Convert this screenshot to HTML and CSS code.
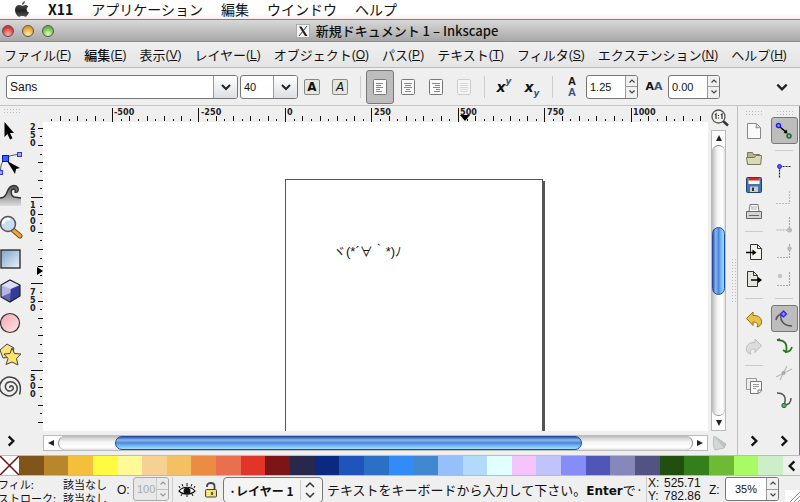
FILE: index.html
```html
<!DOCTYPE html>
<html lang="ja">
<head>
  <meta charset="UTF-8">
  <title>新規ドキュメント 1 – Inkscape</title>
  <link rel="stylesheet" href="styles.css">
</head>
<body>
  <!-- shared symbols -->
  <svg class="defs" width="0" height="0" aria-hidden="true">
    <defs>
      <symbol id="chev-down" viewBox="0 0 12 12"><path d="M2 4l4 4 4-4" fill="none" stroke="#222" stroke-width="2"/></symbol>
      <symbol id="chev-right" viewBox="0 0 12 12"><path d="M4 2l4 4-4 4" fill="none" stroke="#111" stroke-width="2"/></symbol>
      <symbol id="chev-left" viewBox="0 0 12 12"><path d="M8 2L4 6l4 4" fill="none" stroke="#111" stroke-width="2"/></symbol>
      <symbol id="spin-up" viewBox="0 0 8 6"><path d="M1.500 4.500L4 2l2.500 2.500" fill="none" stroke="#444" stroke-width="1.200"/></symbol>
      <symbol id="spin-down" viewBox="0 0 8 6"><path d="M1.500 1.500L4 4l2.500-2.500" fill="none" stroke="#444" stroke-width="1.200"/></symbol>
      <linearGradient id="gBlue" x1="0" y1="0" x2="1" y2="1"><stop offset="0" stop-color="#7fa3c9"/><stop offset="1" stop-color="#eaf2fa"/></linearGradient>
      <linearGradient id="gPink" x1="0" y1="0" x2="1" y2="1"><stop offset="0" stop-color="#f3a3b0"/><stop offset="1" stop-color="#fde8ea"/></linearGradient>
      <linearGradient id="gWave" x1="0" y1="0" x2="0" y2="1"><stop offset="0" stop-color="#555"/><stop offset="1" stop-color="#ddd"/></linearGradient>
      <linearGradient id="gApple" x1="0" y1="0" x2="0" y2="1"><stop offset="0" stop-color="#666"/><stop offset="0.600" stop-color="#222"/><stop offset="1" stop-color="#555"/></linearGradient>
    </defs>
  </svg>

  <nav class="mac-menu">
    <button class="apple" aria-label="Apple">
      <svg width="16" height="17" viewBox="0 0 16 17"><path fill="url(#gApple)" d="M11 .3c.1 1.900-1.400 3.500-3.100 3.500C7.700 2 9.300.4 11 .3zM8.200 4.700c.7 0 1.800-.9 3.300-.8 1.100 0 2.200.6 2.900 1.500-2.600 1.600-2.100 5 .5 6.100-.7 1.900-2.100 4.300-3.600 4.300-1.200 0-1.600-.7-3-.7s-1.900.7-3 .7C3.500 15.800.9 11.900 1 8.700 1.100 5.700 3 4 4.900 4c1.400 0 2.500.7 3.300.7z"/></svg>
    </button>
    <button class="app-name">X11</button>
    <button>アプリケーション</button>
    <button>編集</button>
    <button>ウインドウ</button>
    <button>ヘルプ</button>
  </nav>

  <header class="titlebar">
    <div class="lights">
      <button class="light red" aria-label="閉じる"></button>
      <button class="light yellow" aria-label="しまう"></button>
      <button class="light green" aria-label="拡大"></button>
    </div>
    <h1>
      <svg width="14" height="14" viewBox="0 0 14 14"><rect x=".5" y=".5" width="13" height="13" fill="#f4f4f4" stroke="#aaa"/><path d="M3 2.500h2.500L11.500 12H9z" fill="#222"/><path d="M11 2L3 12" stroke="#333" stroke-width="1"/></svg>
      新規ドキュメント 1 – Inkscape
    </h1>
  </header>

  <nav class="menubar">
    <button>ファイル<span>(<u>F</u>)</span></button>
    <button class="strong">編集<span>(<u>E</u>)</span></button>
    <button>表示<span>(<u>V</u>)</span></button>
    <button>レイヤー<span>(<u>L</u>)</span></button>
    <button>オブジェクト<span>(<u>O</u>)</span></button>
    <button>パス<span>(<u>P</u>)</span></button>
    <button>テキスト<span>(<u>T</u>)</span></button>
    <button>フィルタ<span>(<u>S</u>)</span></button>
    <button>エクステンション<span>(<u>N</u>)</span></button>
    <button>ヘルプ<span>(<u>H</u>)</span></button>
  </nav>

  <div class="toolbar">
    <div class="combo combo-font">
      <input type="text" value="Sans" aria-label="フォント">
      <button aria-label="フォント一覧"><svg width="12" height="12"><use href="#chev-down"/></svg></button>
    </div>
    <div class="combo combo-size">
      <input type="text" value="40" aria-label="サイズ">
      <button aria-label="サイズ一覧"><svg width="12" height="12"><use href="#chev-down"/></svg></button>
    </div>
    <button class="tb" aria-label="太字"><span class="letter bold">A</span></button>
    <button class="tb" aria-label="斜体"><span class="letter italic">A</span></button>
    <span class="sep"></span>
    <button class="tb on" aria-label="左揃え"><svg width="14" height="16" viewBox="0 0 14 16"><rect x=".5" y=".5" width="13" height="15" rx="1" fill="#fafafa" stroke="#777"/><path d="M3 4.500h7M3 6.500h5M3 8.500h7M3 10.500h4M3 12.500h6" stroke="#888"/></svg></button>
    <button class="tb" aria-label="中央揃え"><svg width="14" height="16" viewBox="0 0 14 16"><rect x=".5" y=".5" width="13" height="15" rx="1" fill="#fafafa" stroke="#777"/><path d="M3 4.500h8M4 6.500h6M3 8.500h8M5 10.500h4M4 12.500h6" stroke="#888"/></svg></button>
    <button class="tb" aria-label="右揃え"><svg width="14" height="16" viewBox="0 0 14 16"><rect x=".5" y=".5" width="13" height="15" rx="1" fill="#fafafa" stroke="#777"/><path d="M3 4.500h8M6 6.500h5M4 8.500h7M7 10.500h4M5 12.500h6" stroke="#888"/></svg></button>
    <button class="tb" aria-label="両端揃え" disabled><svg width="14" height="16" viewBox="0 0 14 16"><rect x=".5" y=".5" width="13" height="15" rx="1" fill="#f4f4f4" stroke="#ccc"/><path d="M3 4.500h8M3 6.500h8M3 8.500h8M3 10.500h8M3 12.500h8" stroke="#d8d8d8"/></svg></button>
    <span class="sep"></span>
    <button class="tb script" aria-label="上付き文字">x<sup>y</sup></button>
    <button class="tb script" aria-label="下付き文字">x<sub>y</sub></button>
    <span class="sep"></span>
    <label class="tb stack" for="line-height"><b>A</b><b class="blue">A</b></label>
    <div class="spin">
      <input type="text" id="line-height" value="1.25">
      <span class="arrows">
        <button aria-label="増やす"><svg width="8" height="6"><use href="#spin-up"/></svg></button>
        <button aria-label="減らす"><svg width="8" height="6"><use href="#spin-down"/></svg></button>
      </span>
    </div>
    <label class="tb pair" for="letter-space"><b>A</b><b class="blue">A</b></label>
    <div class="spin">
      <input type="text" id="letter-space" value="0.00">
      <span class="arrows">
        <button aria-label="増やす"><svg width="8" height="6"><use href="#spin-up"/></svg></button>
        <button aria-label="減らす"><svg width="8" height="6"><use href="#spin-down"/></svg></button>
      </span>
    </div>
    <button class="tb more" aria-label="その他"><svg width="14" height="14"><use href="#chev-down"/></svg></button>
  </div>

  <main class="workspace">
    <!-- tools -->
    <div class="toolbox">
      <span class="grip"></span>
      <button aria-label="選択"><svg width="24" height="24" viewBox="0 0 24 24"><path d="M5.500 3v15l3-3 2.500 5.500 2.500-1.200L11 14h4z" fill="#000"/></svg></button>
      <button aria-label="ノード"><svg width="24" height="24" viewBox="0 0 24 24"><path d="M1.500 20C1.500 9 7 4 20 3.500" fill="none" stroke="#555"/><rect x="18.500" y="1.500" width="4" height="4" fill="#aab" stroke="#33e"/><rect x=".5" y="19.500" width="3" height="4" fill="#aab" stroke="#33e"/><rect x="3.500" y="4.500" width="6" height="6" fill="#36f" stroke="#11c"/><path d="M8 10l13 7-4 1-1 5z" fill="#000"/></svg></button>
      <button aria-label="微調整"><svg width="24" height="24" viewBox="0 0 24 24"><path d="M1 15c5 0 6-3 8-8 2-5 8-6 10-2 1 3-1 5-3 4 1-2 0-3-2-3-3 1-2 7 1 8l7 1V23H1z" fill="url(#gWave)"/><path d="M1 15c5 0 6-3 8-8 2-5 8-6 10-2 1 3-1 5-3 4 1-2 0-3-2-3-3 1-2 7 1 8l7 1" fill="none" stroke="#333" stroke-width="1.500"/></svg></button>
      <button aria-label="ズーム"><svg width="24" height="24" viewBox="0 0 24 24"><path d="M14 15l7 6" stroke="#775018" stroke-width="5" stroke-linecap="round"/><path d="M14 15l7 6" stroke="#f0a53a" stroke-width="3" stroke-linecap="round"/><circle cx="9" cy="9" r="7.500" fill="#c9ddf2" stroke="#555" stroke-width="1.500"/><path d="M4 9a5 5 0 0 1 7-4.500" fill="none" stroke="#fff" stroke-width="2.500"/></svg></button>
      <button aria-label="矩形"><svg width="24" height="24" viewBox="0 0 24 24"><rect x="2" y="3" width="19" height="18" fill="url(#gBlue)" stroke="#222" stroke-width="1.300"/></svg></button>
      <button aria-label="3D ボックス"><svg width="24" height="24" viewBox="0 0 24 24"><path d="M2 6l9-5 10 5v11l-10 6-9-5z" fill="#6368b4"/><path d="M2 6l9-5v13l-9 4z" fill="#b4b7e6"/><path d="M11 1l10 5v11l-10-3z" fill="#8e92d2"/><path d="M2 6l9-5 10 5-9 4z" fill="#dcdef6"/><path d="M12 10l9-4v11l-10 6z" fill="#353c98"/><path d="M2 6l9-5 10 5v11l-10 6-9-5z" fill="none" stroke="#222" stroke-width="1.200"/></svg></button>
      <button aria-label="円/弧"><svg width="24" height="24" viewBox="0 0 24 24"><circle cx="11" cy="12" r="9.500" fill="url(#gPink)" stroke="#333" stroke-width="1.200"/></svg></button>
      <button aria-label="星形"><svg width="24" height="24" viewBox="0 0 24 24"><path d="M1 7l7-6 7 4-2 9-9 1z" fill="#fbe37a" stroke="#444"/><path d="M13 5l2.500 5.500 6.500.5-4.500 4.500 1.500 6.500-6-3-6 2.500 2-6-4-4.500 6-.5z" fill="#ffe46a" stroke="#444"/></svg></button>
      <button aria-label="らせん"><svg width="24" height="24" viewBox="0 0 24 24"><path d="M11 13c-1-2 2-3 3-1 1.500 3-3 5-5.500 3.500C5 13 6 8 10 7c5-1 9 3 8 8-1 4-6 7-10.500 5.500C2 19 0 14 1 9.500 2.500 4 8 1 13.500 2.500 20 4 23 11 20.500 19.500" fill="none" stroke="#444" stroke-width="1.500"/></svg></button>
      <button class="last" aria-label="その他のツール"><svg width="14" height="14"><use href="#chev-right"/></svg></button>
    </div>

    <!-- vertical ruler -->
    <div class="v-ruler">
      <svg width="14" height="100%">
        <defs><pattern id="vt" width="14" height="173" y="75" patternUnits="userSpaceOnUse">
          <path d="M2 .5h12M11 9.500h2M9 17.500h5M11 26.500h2M9 35.500h5M11 43.500h2M9 52.500h5M11 61.500h2M9 69.500h5M11 78.500h2M2 86.500h12M11 95.500h2M9 104.500h5M11 112.500h2M9 121.500h5M11 130.500h2M9 138.500h5M11 147.500h2M9 156.500h5M11 164.500h2" stroke="#111" shape-rendering="crispEdges"/>
        </pattern></defs>
        <rect width="14" height="100%" fill="url(#vt)"/>
        <path d="M8 145l6 4-6 4z"/>
        <g class="ruler-text">
          <text x="1" y="8">2</text><text x="1" y="16">5</text><text x="1" y="24">0</text>
          <text x="1" y="86">1</text><text x="1" y="94">0</text><text x="1" y="102">0</text><text x="1" y="110">0</text>
          <text x="1" y="173">7</text><text x="1" y="181">5</text><text x="1" y="189">0</text>
          <text x="1" y="259">5</text><text x="1" y="267">0</text><text x="1" y="275">0</text>
        </g>
      </svg>
    </div>

    <!-- ruler, canvas, scrollbar -->
    <div class="editor">
      <div class="h-ruler">
        <svg width="100%" height="16">
          <defs><pattern id="ht" width="173" height="16" x="242" patternUnits="userSpaceOnUse">
            <path d="M.5 2v14M9.500 13v2M17.500 10v5M26.500 13v2M35.500 10v5M43.500 13v2M52.500 10v5M61.500 13v2M69.500 10v5M78.500 13v2M86.500 2v14M95.500 13v2M104.500 10v5M112.500 13v2M121.500 10v5M130.500 13v2M138.500 10v5M147.500 13v2M156.500 10v5M164.500 13v2" stroke="#111" shape-rendering="crispEdges"/>
          </pattern></defs>
          <rect x="6" width="99%" height="16" fill="url(#ht)"/>
          <path d="M417 9h10l-5 6z"/>
          <g class="ruler-text">
            <text x="71" y="9">-500</text><text x="158" y="9">-250</text><text x="244" y="9">0</text><text x="331" y="9">250</text>
            <text x="417" y="9">500</text><text x="504" y="9">750</text><text x="590" y="9">1000</text>
          </g>
        </svg>
      </div>
      <div class="canvas">
        <div class="page"><p>ヾ(*´∀｀*)ﾉ</p></div>
      </div>
      <div class="scroll h">
        <button aria-label="左へ"><svg width="8" height="8" viewBox="0 0 8 8"><path d="M7 1v6L1 4z" fill="#222"/></svg></button>
        <div class="track"><div class="thumb"></div></div>
        <button aria-label="右へ"><svg width="8" height="8" viewBox="0 0 8 8"><path d="M1 1v6l6-3z" fill="#222"/></svg></button>
      </div>
    </div>

    <div class="v-side">
      <button class="zoom-fit" aria-label="1:1"><svg width="18" height="18" viewBox="0 0 18 18"><path d="M12 12l5 4.500" stroke="#333" stroke-width="2.500"/><circle cx="7.500" cy="7.500" r="6.500" fill="#f4f4f0" stroke="#555" stroke-width="1.300"/><path d="M4 6l1-1v5M10 6l1-1v5M7.500 6v1M7.500 8.500v1" fill="none" stroke="#333" stroke-width="1.200"/></svg></button>
      <div class="scroll v">
        <button aria-label="上へ"><svg width="8" height="8" viewBox="0 0 8 8"><path d="M1 7h6L4 1z" fill="#222"/></svg></button>
        <div class="track"><div class="thumb"></div></div>
        <button aria-label="下へ"><svg width="8" height="8" viewBox="0 0 8 8"><path d="M1 1h6L4 7z" fill="#222"/></svg></button>
      </div>
      <button class="cms" aria-label="カラー表示"><svg width="16" height="16" viewBox="0 0 16 16"><path d="M2 1l12 8-2 4-9 2c-2-4-2-9-1-14z" fill="#d4d8d4" stroke="#bbb"/><path d="M2 1l12 8-2 4z" fill="#bcc2bc"/></svg></button>
    </div>
    <div class="side-grip"><span></span></div>

    <!-- commands -->
    <div class="panel commands">
      <span class="grip"></span>
      <button aria-label="新規"><svg width="18" height="18" viewBox="0 0 18 18"><path d="M2.500 1.500h9l4 4v11h-13z" fill="#fafafa" stroke="#888"/><path d="M11 1.500c1 2 0 3 0 4.500 1.500-.5 3-.5 4.500 0" fill="#ddd" stroke="#888"/></svg></button>
      <button aria-label="開く"><svg width="18" height="18" viewBox="0 0 18 18"><path d="M2.500 15V3.500h5l1 2h6V15z" fill="#b6b68c" stroke="#77775a"/><path d="M1.500 8.500h8l1.500-2h5.500l-.8 9H2.500z" fill="#d8d9b8" stroke="#77775a"/></svg></button>
      <button aria-label="保存"><svg width="18" height="18" viewBox="0 0 18 18"><rect x="1.500" y="1.500" width="15" height="15" rx="1" fill="#4673b0" stroke="#24406c"/><path d="M3.500 2h11v6h-11z" fill="#fff"/><path d="M3.500 2h11v2.500h-11z" fill="#d22"/><path d="M5 10.500h8V16H5z" fill="#ccc"/><path d="M7 11.500h2V15H7z" fill="#333"/></svg></button>
      <button aria-label="印刷"><svg width="18" height="18" viewBox="0 0 18 18"><path d="M5 1.500h8l1 7H4z" fill="#fff" stroke="#777"/><path d="M6 4h6M6 6h6" stroke="#aaa"/><path d="M1.500 8.500h15v7h-15z" fill="#d4d4d4" stroke="#666"/><path d="M4 12.500h10" stroke="#666"/></svg></button>
      <span class="rule"></span>
      <button aria-label="インポート"><svg width="18" height="18" viewBox="0 0 18 18"><path d="M5.500 1.500h7l4 4v11h-11z" fill="#f4f4f0" stroke="#333"/><path d="M12.500 1.500v4h4" fill="none" stroke="#333"/><path d="M1 9.500h7" stroke="#000" stroke-width="1.500"/><path d="M7.500 6.500l4 3-4 3z"/></svg></button>
      <button aria-label="エクスポート"><svg width="18" height="18" viewBox="0 0 18 18"><path d="M2.500 1.500h6l4 4v11h-10z" fill="#e4e4e0" stroke="#333"/><path d="M8.500 1.500v4h4" fill="none" stroke="#333"/><path d="M6 10h7" stroke="#000" stroke-width="1.500"/><path d="M13 7l4 3-4 3z"/></svg></button>
      <span class="rule"></span>
      <button aria-label="元に戻す"><svg width="18" height="18" viewBox="0 0 18 18"><path d="M8 2v3.500c6-.5 9 3 8.500 7.500-.3 2-2 3.500-4.500 4 2-3 0-5-4-5v3.500L1.500 8.500z" fill="#ebc246" stroke="#8d6d15"/></svg></button>
      <button aria-label="やり直す" disabled><svg width="18" height="18" viewBox="0 0 18 18"><path d="M10 2v3.500c-6-.5-9 3-8.500 7.500.3 2 2 3.500 4.500 4-2-3 0-5 4-5v3.500l6.500-7z" fill="#dcdcdc" stroke="#bbb"/></svg></button>
      <span class="rule"></span>
      <button aria-label="複製"><svg width="18" height="18" viewBox="0 0 18 18"><path d="M1.500 1.500h10v11h-10z" fill="#eee" stroke="#999"/><path d="M5.500 4.500h11V14l-3 2.500h-8z" fill="#f8f8f8" stroke="#777"/><path d="M8 7.500h6M8 9.500h6M8 11.500h3" stroke="#999"/><path d="M13 16v-3h3" fill="none" stroke="#777"/></svg></button>
      <button class="last" aria-label="その他のコマンド"><svg width="14" height="14"><use href="#chev-right"/></svg></button>
    </div>

    <!-- snapping -->
    <div class="panel snap">
      <span class="grip"></span>
      <button class="on" aria-label="スナップ"><svg width="18" height="18" viewBox="0 0 18 18"><path d="M5 5l6 5" stroke="#000" stroke-width="1.500"/><path d="M12.500 11.500L8.500 11l3-3.500z"/><circle cx="3.500" cy="3.500" r="2" fill="#99f" stroke="#22e" stroke-width="1.500"/><circle cx="14" cy="14" r="2" fill="#8b8" stroke="#264" stroke-width="1.500"/></svg></button>
      <span class="rule"></span>
      <button aria-label="境界枠"><svg width="18" height="18" viewBox="0 0 18 18"><path d="M4.500 4.500h12M4.500 4.500v12" stroke="#222" stroke-dasharray="2 1" stroke-width="1.200"/><circle cx="4.500" cy="4.500" r="2" fill="#55f" stroke="#22e"/></svg></button>
      <button aria-label="境界枠の辺"><svg width="18" height="18" viewBox="0 0 18 18"><path d="M14.500 2v12.500H1" fill="none" stroke="#bbb" stroke-dasharray="2 1" stroke-width="1.200"/></svg></button>
      <button aria-label="境界枠の角"><svg width="18" height="18" viewBox="0 0 18 18"><path d="M14.500 1v13H1" fill="none" stroke="#aaa" stroke-dasharray="2 1" stroke-width="1.200"/><circle cx="14.500" cy="14" r="2.500" fill="#bbb"/></svg></button>
      <button aria-label="辺の中点"><svg width="18" height="18" viewBox="0 0 18 18"><path d="M14.500 1v13.500H2" fill="none" stroke="#aaa" stroke-dasharray="2 1" stroke-width="1.200"/><circle cx="14.500" cy="5.500" r="2.200" fill="#bbb"/></svg></button>
      <button aria-label="境界枠の中心"><svg width="18" height="18" viewBox="0 0 18 18"><path d="M14.500 2v13.500H2" fill="none" stroke="#aaa" stroke-dasharray="2 1" stroke-width="1.200"/><circle cx="5" cy="6" r="2.200" fill="#c4c4c4"/></svg></button>
      <span class="rule"></span>
      <button class="on" aria-label="ノードにスナップ"><svg width="18" height="18" viewBox="0 0 18 18"><path d="M1 10c1-5 4-6 7-5M6 5c-1 6 3 11 11 11" fill="none" stroke="#555" stroke-width="1.500"/><path d="M8.500 1l3 3-3 3-3-3z" fill="#88f" stroke="#22e" stroke-width="1.200"/></svg></button>
      <button aria-label="パス"><svg width="18" height="18" viewBox="0 0 18 18"><path d="M2 3c7 0 11 3 9 12 3 0 5-2 6-5M2 3l3-1M11 15l-3-2" fill="none" stroke="#2f7226" stroke-width="1.800"/></svg></button>
      <button aria-label="交点"><svg width="18" height="18" viewBox="0 0 18 18"><path d="M1 13L17 5M5 16l7-14" stroke="#bbb" stroke-width="1.300"/><circle cx="8.500" cy="9" r="2" fill="#aaa"/></svg></button>
      <button aria-label="シャープノード"><svg width="18" height="18" viewBox="0 0 18 18"><path d="M2 2c7 0 10 4 7 12 5 0 7-3 7-7" fill="none" stroke="#555" stroke-width="1.500"/><circle cx="9" cy="14.500" r="2.200" fill="#6a6" stroke="#264"/></svg></button>
      <button class="last" aria-label="その他のスナップ"><svg width="14" height="14"><use href="#chev-right"/></svg></button>
    </div>
  </main>

  <div class="palette">
    <button class="none" aria-label="なし"><svg width="100%" height="100%" viewBox="0 0 19 19" preserveAspectRatio="none"><path d="M0 0l19 19M19 0L0 19" stroke="#6b1414" stroke-width="1.500"/></svg></button>
    <div class="swatches" id="swatches"></div>
    <button class="pal-menu" aria-label="パレット"><svg width="14" height="14"><use href="#chev-left"/></svg></button>
  </div>

  <footer class="status">
    <dl class="style-info">
      <dt>フィル:</dt><dd>該当なし</dd>
      <dt>ストローク:</dt><dd>該当なし</dd>
    </dl>
    <label class="lbl" for="opacity">O:</label>
    <div class="spin small">
      <input type="text" id="opacity" value="100" disabled>
      <span class="arrows">
        <button aria-label="増やす" disabled><svg width="8" height="6"><use href="#spin-up"/></svg></button>
        <button aria-label="減らす" disabled><svg width="8" height="6"><use href="#spin-down"/></svg></button>
      </span>
    </div>
    <div class="layer-tools">
      <button aria-label="表示切替"><svg width="18" height="16" viewBox="0 0 18 16"><path d="M1 9c4-5 12-5 16 0-4 4-12 4-16 0z" fill="#fff" stroke="#111" stroke-width="1.200"/><circle cx="9" cy="9" r="3.500" fill="#111"/><path d="M2 6L1 4M5 4.500L4 2M9 4V1M13 4.500L14 2M16 6l1-2M4 12l-1 2M9 13v2M14 12l1 2" stroke="#111"/></svg></button>
      <button aria-label="ロック切替"><svg width="14" height="16" viewBox="0 0 14 16"><path d="M3 5V4c0-4 7.500-4 7.500 0v4" fill="none" stroke="#444" stroke-width="1.800"/><rect x="1.500" y="7.500" width="11" height="7.500" rx="1" fill="#f5dc6a" stroke="#444"/><path d="M3 9.500h3M3 11.500h3M3 13.500h3" stroke="#fff"/><path d="M8 10v3" stroke="#333" stroke-width="1.500"/></svg></button>
    </div>
    <select class="layer" aria-label="現在のレイヤー"><option>·レイヤー 1</option></select>
    <p class="hint">テキストをキーボードから入力して下さい。<b>Enter</b>で·</p>
    <dl class="coords">
      <dt>X:</dt><dd>525.71</dd>
      <dt>Y:</dt><dd>782.86</dd>
    </dl>
    <label class="lbl" for="zoom">Z:</label>
    <div class="spin zoom">
      <input type="text" id="zoom" value="35%">
      <span class="arrows">
        <button aria-label="拡大"><svg width="8" height="6"><use href="#spin-up"/></svg></button>
        <button aria-label="縮小"><svg width="8" height="6"><use href="#spin-down"/></svg></button>
      </span>
    </div>
    <svg class="resize" width="15" height="12" viewBox="0 0 15 12"><rect width="15" height="12" fill="#fff"/><path d="M5 12L15 2M9 12l6-6M13 12l2-2" stroke="#888"/></svg>
  </footer>

  <script>
    const colors = [
      "#80541b", "#b8862b", "#f4bf3b", "#fffb42", "#fffa96", "#f7d193", "#f4c063", "#ec8c43",
      "#ea6f4f", "#e23529", "#7b1518", "#28284c", "#0a2a82", "#1f55ba", "#2c70c6", "#338bf8",
      "#4288d0", "#95c0fa", "#b2dafb", "#e0ffff", "#f4c4fb", "#c0c4fb", "#868cf8", "#5055b8",
      "#8687bb", "#525383", "#205010", "#357f1a", "#6fba35", "#a9fb63", "#cdeec6"
    ];
    const box = document.getElementById("swatches");
    colors.forEach(c => {
      const b = document.createElement("button");
      b.style.backgroundColor = c;
      b.setAttribute("aria-label", c);
      box.appendChild(b);
    });
  </script>
</body>
</html>
```
FILE: styles.css
```css
* {
  box-sizing: border-box;
}

body {
  margin: 0;
  height: 100vh;
  display: flex;
  flex-direction: column;
  overflow: hidden;
  background: #efefef;
  color: #111;
  font-family: "Liberation Sans", "Noto Sans CJK JP", sans-serif;
  font-size: 12px;
}

button,
input,
select {
  margin: 0;
  padding: 0;
  border: 0;
  background: none;
  color: inherit;
  font: inherit;
}

button {
  display: flex;
  align-items: center;
  justify-content: center;
  white-space: nowrap;
}

svg {
  display: block;
  flex: none;
}

dl, dt, dd, p, h1 {
  margin: 0;
}

.defs {
  position: absolute;
}

/* system menu */
.mac-menu {
  display: flex;
  align-items: center;
  gap: 18px;
  height: 20px;
  flex: none;
  padding: 0 0 1px 14px;
  background: linear-gradient(#fff 70%, #f8eef0);
  border-bottom: 1px solid #8f7a80;
  font-family: "Noto Sans CJK JP", sans-serif;
  font-size: 14px;
  line-height: 18px;
}

.mac-menu .app-name {
  font-weight: bold;
}

/* window title */
.titlebar {
  display: flex;
  align-items: center;
  justify-content: center;
  position: relative;
  flex: none;
  height: 22px;
  padding-right: 6px;
  background: linear-gradient(#d8d8d8, #a8a8a8);
  border-bottom: 1px solid #8c8c8c;
}

.titlebar h1 {
  display: flex;
  align-items: center;
  gap: 6px;
  font: 500 13px/20px "Noto Sans CJK JP", sans-serif;
}

.lights {
  position: absolute;
  left: 2px;
  display: flex;
  gap: 8px;
}

.light {
  width: 12px;
  height: 12px;
  border-radius: 50%;
  border: 1px solid #555;
}

.red { background: radial-gradient(circle at 50% 80%, #ffb0a8, #d8323a 70%); }
.yellow { background: radial-gradient(circle at 50% 80%, #fff0a0, #e59a28 70%); }
.green { background: radial-gradient(circle at 50% 80%, #dcffb8, #66b440 70%); }

/* application menu */
.menubar {
  display: flex;
  align-items: center;
  gap: 13px;
  flex: none;
  height: 26px;
  padding: 0 4px;
  background: linear-gradient(#f0f0f0, #e4e4e4);
  border-bottom: 1px solid #bbb;
  font-family: "Noto Sans CJK JP", sans-serif;
  font-size: 13px;
}

.menubar span {
  font-family: "Liberation Sans", sans-serif;
  font-size: 12px;
}

.menubar .strong {
  font-weight: 500;
}

/* tool controls */
.toolbar {
  display: flex;
  align-items: center;
  flex: none;
  height: 38px;
  padding: 0 4px 0 6px;
  border-bottom: 1px solid #c4c4c4;
}

.combo,
.spin {
  display: flex;
  flex: none;
  height: 24px;
  background: #fff;
  border: 1px solid #777;
  border-radius: 3px;
  overflow: hidden;
}

.combo input,
.spin input {
  flex: 1;
  min-width: 0;
  padding-left: 3px;
}

.combo button {
  width: 24px;
  border-left: 1px solid #999;
  background: linear-gradient(#fff, #dcdfe4);
}

.combo-font {
  width: 232px;
  margin-right: 2px;
}

.combo-size {
  width: 58px;
  font-size: 11px;
}

.spin {
  width: 52px;
  margin-right: 2px;
  font-size: 11px;
}

.arrows {
  display: flex;
  flex-direction: column;
  width: 12px;
  border-left: 1px solid #999;
}

.arrows button {
  flex: 1;
  background: #f0f0f0;
}

.arrows button + button {
  border-top: 1px solid #999;
}

.tb {
  display: flex;
  align-items: center;
  justify-content: center;
  flex: none;
  width: 28px;
  height: 34px;
}

.on {
  background: #bdbdbd;
  border: 1px solid #777;
  border-radius: 3px;
}

.letter {
  width: 16px;
  height: 16px;
  border: 1px solid #888;
  border-radius: 2px;
  background: #e4e6e0;
  font: 12px/14px "DejaVu Sans", sans-serif;
}

.letter.bold {
  font-weight: bold;
}

.letter.italic {
  font-style: italic;
}

.script {
  font: italic bold 14px "DejaVu Sans", sans-serif;
}

.script sup,
.script sub {
  color: #35557f;
  font-size: 9px;
}

.script sup {
  align-self: flex-start;
  margin-top: 6px;
}

.script sub {
  align-self: flex-end;
  margin-bottom: 6px;
}

.stack {
  flex-direction: column;
  font: bold 11px/11px "Liberation Sans", sans-serif;
}

.pair {
  font: bold 11px "DejaVu Sans", sans-serif;
}

.blue {
  color: #35557f;
}

.sep {
  flex: none;
  width: 12px;
  height: 22px;
  background: linear-gradient(#ccc, #ccc) center / 1px 100% no-repeat;
}

.more {
  margin-left: auto;
}

/* work area */
.workspace {
  display: flex;
  flex: 1;
  min-height: 0;
  border-right: 1px solid #777;
}

.grip {
  width: 17px;
  height: 6px;
  margin: 2px 0 1px;
  background: radial-gradient(circle, #bbb 1px, transparent 1px) 0 0 / 3px 3px;
}

.toolbox,
.panel {
  display: flex;
  flex-direction: column;
  align-items: center;
  flex: none;
}

.toolbox {
  width: 29px;
  padding-right: 7px;
}

.toolbox button {
  width: 24px;
  height: 32px;
}

.toolbox .last,
.panel .last {
  height: 28px;
  margin-top: auto;
}

.v-ruler {
  flex: none;
  width: 14px;
  padding-top: 16px;
  height: calc(100% - 24px);
  overflow: hidden;
}

.ruler-text {
  font: bold 9px "Liberation Sans Narrow", "DejaVu Sans Condensed", sans-serif;
  fill: #222;
}

.editor {
  display: flex;
  flex-direction: column;
  flex: 1;
  min-width: 0;
}

.h-ruler {
  flex: none;
  height: 16px;
  overflow: hidden;
}

.canvas {
  position: relative;
  flex: 1;
  background: #fff;
  overflow: hidden;
}

.page {
  position: absolute;
  left: 242px;
  top: 57px;
  width: 258px;
  height: 366px;
  border: 1px solid #555;
  box-shadow: 2px 2px 0 #555;
}

.page p {
  position: absolute;
  left: 47px;
  top: 62px;
  font: 13px/20px "Liberation Sans", "Noto Sans CJK JP", sans-serif;
  white-space: nowrap;
}

.scroll {
  display: flex;
  background: #fff;
  border: 1px solid #bbb;
}

.scroll button {
  flex: none;
  width: 14px;
  height: 14px;
}

.track {
  display: flex;
  flex: 1;
  border-radius: 8px;
}

.track::before,
.track::after {
  content: "";
}

.thumb {
  border-radius: 8px;
  border: 1px solid #234a9c;
}

.scroll.h {
  flex: none;
  height: 16px;
  margin: 4px 0;
}

.scroll.h .track {
  background: linear-gradient(#bbb, #f4f4f4 40%, #fff 80%, #ddd);
  border-left: 1px solid #888;
  border-right: 1px solid #888;
}

.scroll.h .track::before { flex: 56; }
.scroll.h .thumb {
  flex: 467;
  background: linear-gradient(#2a56c0, #8db8ea 25%, #4a88dc 50%, #6fb4f4 70%, #a4dcff);
}
.scroll.h .track::after { flex: 111; }

.v-side {
  display: flex;
  flex-direction: column;
  flex: none;
  width: 23px;
  padding-left: 3px;
}

.scroll.v {
  flex-direction: column;
  flex: 1;
  width: 15px;
}

.scroll.v .track {
  flex-direction: column;
  background: linear-gradient(90deg, #bbb, #f4f4f4 40%, #fff 80%, #ddd);
  border-top: 1px solid #888;
  border-bottom: 1px solid #888;
}

.scroll.v .track::before { flex: 82; }
.scroll.v .thumb {
  flex: 67;
  background: linear-gradient(90deg, #2a56c0, #8db8ea 25%, #4a88dc 50%, #6fb4f4 70%, #a4dcff);
}
.scroll.v .track::after { flex: 122; }

.zoom-fit,
.cms {
  width: 18px;
  height: 24px;
}

.side-grip {
  display: flex;
  align-items: center;
  flex: none;
  width: 6px;
}

.side-grip span {
  width: 6px;
  height: 45px;
  background: radial-gradient(circle, #bbb 1px, transparent 1px) 0 0 / 3px 3px;
}

.panel {
  width: 30px;
  padding-top: 2px;
}

.panel button {
  flex: none;
  width: 27px;
  height: 27px;
}

.commands {
  width: 32px;
  border-left: 1px solid #c0c0c0;
}

.rule {
  flex: none;
  width: 18px;
  height: 13px;
  background: linear-gradient(#ccc, #ccc) center / 100% 1px no-repeat;
}

/* palette */
.palette {
  display: flex;
  flex: none;
  height: 21px;
  border-top: 1px solid #bbb;
  border-bottom: 1px solid #bbb;
}

.none {
  flex: none;
  width: 19px;
  background: #fff;
}

.swatches {
  display: flex;
  flex: 1;
}

.swatches button {
  flex: 1;
}

.pal-menu {
  width: 17px;
}

/* status bar */
.status {
  display: flex;
  align-items: flex-start;
  flex: none;
  height: 26px;
  padding-top: 1px;
  overflow: hidden;
}

.style-info,
.coords {
  display: grid;
  flex: none;
}

.style-info {
  grid-template-columns: 65px 54px;
  margin-left: -2px;
  font: 11px/14px "Noto Sans CJK JP", sans-serif;
}

.coords {
  grid-template-columns: 16px 45px;
  padding-left: 1px;
  border-left: 1px solid #ccc;
  line-height: 13px;
}

.lbl {
  flex: none;
  width: 16px;
  line-height: 26px;
}

.spin.small {
  width: 36px;
  background: #e8e8e8;
  border-color: #aaa;
  margin-right: 3px;
}

.small input {
  color: #aaa;
}

.small .arrows,
.small button {
  border-color: #bbb;
  opacity: 0.7;
}

.spin.zoom {
  width: 54px;
}

.zoom input {
  padding-left: 9px;
}

.layer-tools {
  display: flex;
  flex: none;
  gap: 8px;
  height: 26px;
  padding: 0 5px;
  border-left: 1px solid #ccc;
}

.layer {
  appearance: none;
  flex: none;
  width: 100px;
  height: 26px;
  padding-left: 5px;
  border: 1px solid #777;
  border-radius: 4px;
  background: url("data:image/svg+xml,%3Csvg xmlns='http://www.w3.org/2000/svg' width='20' height='20'%3E%3Cpath d='M.5 0v20' stroke='%23ccc'/%3E%3Cpath d='M6 7l4-4 4 4M6 13l4 4 4-4' fill='none' stroke='%23333' stroke-width='1.500'/%3E%3C/svg%3E") right 2px center no-repeat #f4f4f4;
  font: bold 12px "Noto Sans CJK JP", sans-serif;
}

.hint {
  flex: 1;
  min-width: 0;
  margin-left: 4px;
  overflow: hidden;
  white-space: nowrap;
  font: 13px/26px "Noto Sans CJK JP", sans-serif;
}

.hint b {
  font: bold 12px "DejaVu Sans", sans-serif;
}

.resize {
  align-self: flex-end;
  margin-left: 4px;
}
```
